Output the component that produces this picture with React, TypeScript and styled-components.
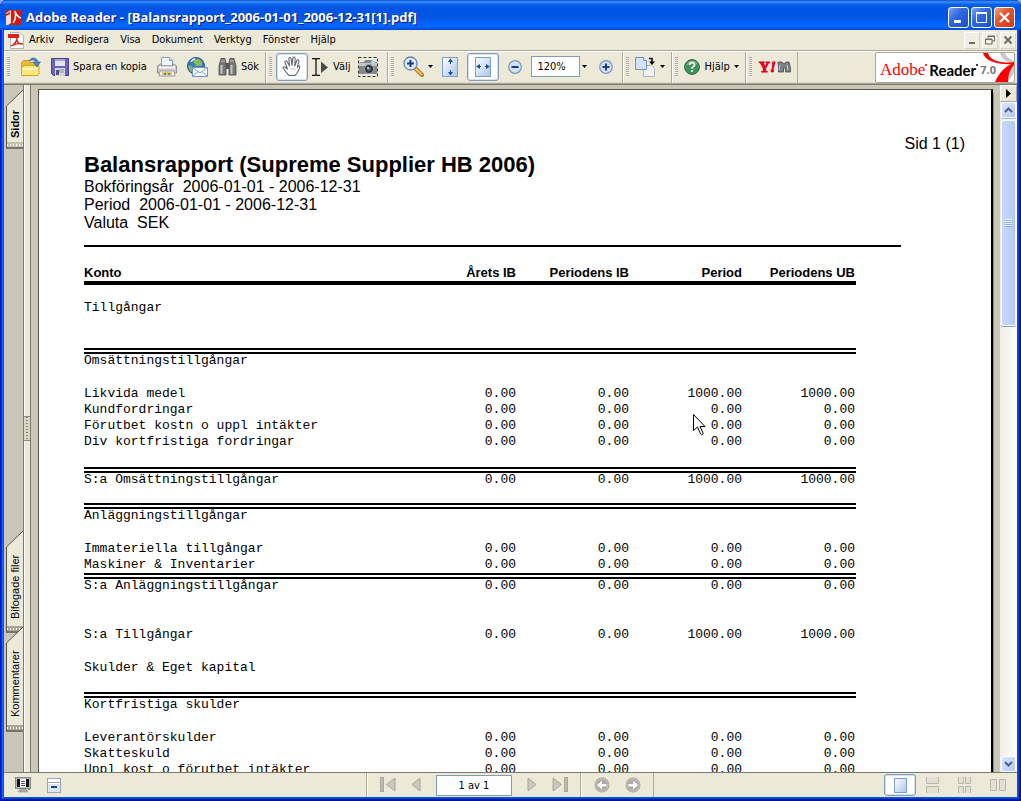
import React from "react";
import styled, { createGlobalStyle, css } from "styled-components";

const ui = `"DejaVu Sans Condensed", Tahoma, "Liberation Sans", sans-serif`;
const face = "#ece9d8";
const shade = "#aca899";
const desk = "#cbc7b8";

const GlobalStyle = createGlobalStyle`
  html, body, #root { height: 100%; margin: 0; }
  body { background: #8fa9e6; font-family: ${ui}; font-size: 11px; color: #000; overflow: hidden; }
  * { box-sizing: border-box; }
  button { font: inherit; color: inherit; border: 0; background: none; padding: 0; margin: 0; }
  input { font: inherit; color: inherit; margin: 0; }
  svg { display: block; flex: none; }
`;

/* ---------- window frame ---------- */

const Window = styled.div`
  height: 100vh;
  display: flex;
  flex-direction: column;
  padding: 0 4px 4px;
  border-radius: 7px 7px 0 0;
  overflow: hidden;
  background: #0855dd;
  box-shadow:
    inset 1px 0 #0019cf, inset -1px 0 #00138c, inset 0 -1px #00138c,
    inset 2px 0 #0831d9, inset -2px 0 #001ea0, inset 0 -2px #001ea0,
    inset 3px 0 #166aee, inset -3px 0 #0441d8, inset 0 -3px #0441d8;
`;

const TitleBar = styled.header`
  flex: none;
  height: 30px;
  margin: 0 -4px;
  padding: 4px 6px 0 6px;
  display: flex;
  align-items: center;
  gap: 5px;
  color: #fff;
  background: linear-gradient(#0a4ad0 0, #3a93ff 2px, #0b62ea 4px, #0054e3 8px, #0055e5 18px, #0066ff 24px, #0064f8 27px, #0047d0 30px);
`;

const WindowTitle = styled.h1`
  flex: 1;
  margin: 0;
  font: bold 13px/20px "Open Sans", "Trebuchet MS", sans-serif;
  text-shadow: 1px 1px #0a1883;
  white-space: nowrap;
`;

const CaptionButton = styled.button<{ $close?: boolean }>`
  width: 21px;
  height: 21px;
  display: grid;
  place-items: center;
  border: 1px solid #fff;
  border-radius: 3px;
  background: ${(p) =>
    p.$close
      ? "linear-gradient(135deg, #f0a088 0, #e0552f 40%, #cf3a12 100%)"
      : "linear-gradient(135deg, #7ba5f5 0, #3169e0 40%, #1c4cd0 100%)"};
`;

const CaptionButtons = styled.div`
  display: flex;
  gap: 2px;
`;

/* ---------- menu ---------- */

const MenuBar = styled.nav`
  flex: none;
  height: 21px;
  padding: 0 1px 0 4px;
  display: flex;
  align-items: center;
  background: ${face};
  border-bottom: 1px solid ${shade};
`;

const Menus = styled.div`
  display: flex;
  gap: 1px;
`;

const MenuItem = styled.button`
  padding: 0 5px;
  line-height: 18px;
`;

const Spring = styled.div`
  flex: 1;
`;

const MdiButtons = styled.div`
  display: flex;
  gap: 2px;
`;

const MdiButton = styled.button`
  width: 16px;
  height: 17px;
  display: grid;
  place-items: center;
  background: #f1efe3;
  border: 1px solid;
  border-color: #fff #d8d4c2 #d8d4c2 #fff;
`;

/* ---------- toolbars ---------- */

const ToolBar = styled.div`
  flex: none;
  height: 33px;
  display: flex;
  padding-right: 2px;
  background: ${face};
  border-top: 1px solid #fff;
  border-bottom: 1px solid ${shade};
  box-shadow: inset 0 -1px #dedac8;
`;

const ToolGroup = styled.div<{ $gap?: number; $wide?: boolean }>`
  display: flex;
  align-items: center;
  gap: ${(p) => p.$gap ?? 6}px;
  padding: 0 ${(p) => (p.$wide ? 9 : 6)}px 2px 2px;
  border-left: 1px solid #fff;
  border-right: 1px solid ${shade};
`;

const Grip = styled.span`
  width: 3px;
  height: 20px;
  flex: none;
  background: repeating-linear-gradient(${shade} 0 1px, #f8f6ec 1px 2px);
`;

const Tool = styled.button<{ $pressed?: boolean }>`
  display: flex;
  align-items: center;
  justify-content: center;
  gap: 4px;
  white-space: nowrap;
  ${(p) =>
    p.$pressed &&
    css`
      width: 32px;
      height: 28px;
      background: #fff;
      border: 1px solid #7f9db9;
      border-radius: 3px;
      box-shadow: inset 0 0 0 1px #d5e1ee;
    `}
`;

const Field = styled.input<{ $width: number; $centered?: boolean }>`
  width: ${(p) => p.$width}px;
  height: 21px;
  padding: 0 5px;
  border: 1px solid #7f9db9;
  background: #fff;
  text-align: ${(p) => (p.$centered ? "center" : "left")};
`;

const ZoomBox = styled.div`
  display: flex;
  align-items: center;
  gap: 2px;
  padding-right: 3px;
`;

const Brand = styled.a`
  position: relative;
  width: 140px;
  height: 31px;
  display: flex;
  align-items: center;
  padding: 4px 0 0 4px;
  gap: 1px;
  background: #fff;
  border: 1px solid ${shade};
  border-radius: 2px;
  color: #000;
  text-decoration: none;
  overflow: hidden;
`;

const BrandSwoosh = styled.svg`
  position: absolute;
  right: 0;
  top: 0;
`;

const BrandAdobe = styled.span`
  font: 17px/20px "Liberation Serif", serif;
  color: #f00;
`;

const BrandReader = styled.span`
  font: bold 15px/20px Lato, sans-serif;
`;

const BrandVersion = styled.span`
  position: relative;
  font: bold 11px/20px "Open Sans", sans-serif;
  color: #777;
`;

const Mark = styled.i<{ $color: string }>`
  width: 2px;
  height: 2px;
  margin: 0 1px 10px -1px;
  border-radius: 1px;
  background: ${(p) => p.$color};
`;

/* ---------- work area ---------- */

const Work = styled.main`
  flex: 1;
  min-height: 0;
  display: flex;
  background: ${desk};
  border-top: 1px solid #7d7a6c;
`;

const TabStrip = styled.nav`
  width: 20px;
  flex: none;
  display: flex;
  flex-direction: column;
  padding: 5px 0 40px 2px;
  border-right: 1px solid #7d7a6c;
`;

const TabButton = styled.button<{ $active?: boolean; $body: number; $overlap?: boolean }>`
  position: relative;
  display: flex;
  flex-direction: column;
  width: 17px;
  margin-top: ${(p) => (p.$overlap ? "-6px" : "0")};
  font: ${(p) => (p.$active ? "bold" : "normal")} 11px/16px "Liberation Sans", sans-serif;

  & > span {
    height: ${(p) => p.$body}px;
    display: flex;
    align-items: center;
    justify-content: center;
    writing-mode: vertical-rl;
    transform: rotate(180deg);
    background: ${face};
    border-right: 1px solid #55534a;
    white-space: nowrap;
  }
`;

const TabFoot = styled.i<{ $active?: boolean }>`
  height: 7px;
  border-left: 1px solid #55534a;
  border-bottom: 2px solid #77756a;
  background:
    radial-gradient(circle, #fff 0 1px, transparent 1px) 2px 1px / 3px 4px repeat-x,
    ${(p) => (p.$active ? "#c4c0b0" : "#a9a698")};
`;

const Splitter = styled.div`
  width: 7px;
  flex: none;
  display: flex;
  align-items: center;
  background: linear-gradient(90deg, #fff 0 1px, ${face} 1px);
  border-right: 1px solid #7d7a6c;
`;

const SplitterHandle = styled.div`
  width: 6px;
  height: 25px;
  border-top: 1px solid #8d8a7c;
  border-bottom: 1px solid #8d8a7c;
  background: radial-gradient(circle, #8a877a 0 1px, transparent 1px) 1px 2px / 4px 3px, #dbd7c6;
`;

const Viewport = styled.section`
  flex: 1;
  min-width: 0;
  overflow: hidden;
  padding: 4px 7px 0;
`;

const Paper = styled.article`
  position: relative;
  min-height: 100%;
  padding: 44px 26px 0 45px;
  background: #fff;
  border: 1px solid #55534a;
  border-right: 2px solid #000;
  border-bottom: 0;
  box-shadow: 1px 4px #8d8a7c;
  font: 16px/18px "Liberation Sans", Arial, sans-serif;
`;

const PageMark = styled.p`
  margin: 0;
  line-height: 20px;
  text-align: right;
`;

const ReportTitle = styled.h2`
  margin: 0;
  font-size: 22px;
  line-height: 22px;
  padding-bottom: 2px;
`;

const Meta = styled.p`
  margin: 0;
  white-space: pre;
`;

const Rule = styled.hr`
  margin: 13px 64px 18px 0;
  border: 0;
  height: 2px;
  background: #000;
`;

const TableWrap = styled.div`
  padding-right: 109px;
`;

const Ledger = styled.table`
  width: 100%;
  table-layout: fixed;
  border-spacing: 0;
  font: 13px/16px "Liberation Mono", "Courier New", monospace;

  th, td {
    padding: 0 1px 0 0;
    text-align: right;
    white-space: nowrap;
  }
  th:first-child, td:first-child {
    text-align: left;
  }
  thead th {
    width: 113px;
    font: bold 13px/16px "Liberation Sans", Arial, sans-serif;
    border-bottom: 4px solid #000;
  }
  thead th:first-child {
    width: auto;
  }
`;

const LedgerRow = styled.tr<{ $rule?: boolean; $before?: number; $after?: number }>`
  && > td {
    padding-top: ${(p) => p.$before ?? 0}px;
    padding-bottom: ${(p) => p.$after ?? 0}px;
    ${(p) =>
      p.$rule &&
      css`
        border-top: 6px double #000;
        line-height: 14px;
      `}
  }
`;

const Pointer = styled.svg`
  position: absolute;
  left: 654px;
  top: 324px;
`;

const ScrollColumn = styled.div`
  width: 17px;
  flex: none;
  display: flex;
  flex-direction: column;
  background: linear-gradient(90deg, #eeede5, #fefefb);
`;

const PaneMenuButton = styled.button`
  height: 17px;
  display: grid;
  place-items: center;
  background: ${face};
  border: 1px solid;
  border-color: #fff ${shade} ${shade} #fff;
`;

const ScrollButton = styled.button`
  height: 16px;
  margin: 0 1px;
  display: grid;
  place-items: center;
  border: 1px solid #fff;
  border-radius: 2px;
  background: linear-gradient(135deg, #dbe5ff, #b5c9f8);
  box-shadow: 0 1px #9db6e8;
`;

const ScrollThumb = styled.div`
  flex: 0 0 30%;
  margin: 2px 1px 0;
  display: grid;
  place-items: center;
  border: 1px solid #fff;
  border-radius: 2px;
  background: linear-gradient(90deg, #c9d7fc, #bccffb 70%, #afc4f6);
  box-shadow: 0 1px #7d9ee0;
`;

/* ---------- status bar ---------- */

const StatusBar = styled.footer`
  flex: none;
  height: 25px;
  display: grid;
  grid-template-columns: 1fr auto 1fr;
  background: ${face};
  border-top: 1px solid #7d7a6c;
`;

const StatusSide = styled.div<{ $end?: boolean }>`
  display: flex;
  align-items: center;
  justify-content: ${(p) => (p.$end ? "flex-end" : "flex-start")};
  gap: ${(p) => (p.$end ? 18 : 16)}px;
  padding: 0 11px;

  & > button[aria-pressed="true"] {
    height: 22px;
    margin-right: -8px;
  }
`;

const PagerGroup = styled.div`
  display: flex;
`;

const Pager = styled.div`
  display: flex;
  align-items: center;
  justify-content: center;
  gap: 15px;
  padding: 0 12px;
  border-left: 1px solid #fff;
  border-right: 1px solid ${shade};
  &:first-child {
    box-shadow: -1px 0 ${shade};
  }
`;

/* ---------- drawings ---------- */

const ReaderIcon = () => (
  <svg width="15" height="15" viewBox="0 0 15 15">
    <rect width="15" height="15" rx="1" fill="#d8180c" />
    <path d="M0 3l5-3v13l-3 2H0z" fill="#f7dcd6" />
    <path d="M0 4l4-2v2L0 6z" fill="#c8200f" />
    <path d="M7 13c3-4 3-8 2-12 1 4 3 6 6 7" stroke="#fff" strokeWidth="1.500" fill="none" />
  </svg>
);

const PdfIcon = () => (
  <svg width="16" height="17" viewBox="0 0 16 17">
    <path d="M2.500.500h9l4 3v13h-13z" fill="#fff" stroke="#b4b4b4" />
    <rect y="2" width="11" height="4" fill="#d9231a" />
    <path d="M3 14c3-1 6-5 6-8-1 4 2 6 6 6-4-1-8 0-12 2z" fill="none" stroke="#d9231a" strokeWidth="1.300" />
  </svg>
);

const OpenIcon = () => (
  <svg width="21" height="20" viewBox="0 0 21 20">
    <path d="M1.500 18V5.500l2-2h5l1.500 2h7V18z" fill="#e9bd3a" stroke="#c99a1e" />
    <path d="M1.500 18.500V10l3-1.500H19V17l-1 1.500z" fill="#fce67c" stroke="#d3a526" />
    <path d="M2.500 12h15" stroke="#fff6c0" strokeWidth="2" />
    <path d="M9 4C11 0 17 0 18 5h2.500L17 10l-4-5h2.500C15 2.500 12 2.500 9 4z" fill="#4d86c6" stroke="#2c5e9c" strokeWidth=".6" />
  </svg>
);

const SaveIcon = () => (
  <svg width="18" height="18" viewBox="0 0 18 18">
    <path d="M.5.5h17v17h-15l-2-2z" fill="#6a63bd" stroke="#474098" />
    <rect x="4" y="1" width="10" height="7" fill="#e3e2ee" />
    <rect x="4" y="1" width="10" height="2" fill="#a9a6cf" />
    <rect x="4" y="10" width="10" height="8" fill="#d5d4de" />
    <path d="M8 12h5M8 14h5" stroke="#8c8c9a" />
    <rect x="5" y="12" width="3" height="5" fill="#55516e" />
  </svg>
);

const PrintIcon = () => (
  <svg width="20" height="20" viewBox="0 0 20 20">
    <path d="M4.500 9V.5h8l3 3V9z" fill="#eef4fc" stroke="#8aa4c4" />
    <path d="M12.500.5v3h3" fill="#c6d8ee" stroke="#8aa4c4" />
    <path d="M.5 16V9l3-2h1v2h11V7h1l3 2v7z" fill="#c9c9cd" stroke="#8e8e94" />
    <path d="M2 10.500h16" stroke="#f8f8f8" strokeWidth="2" />
    <path d="M3 14h14l1 5H2z" fill="#f4f4f6" stroke="#9a9aa0" />
    <path d="M5 15h10v3H5z" fill="#f0c94a" />
    <path d="M7 16h2v2H7zM11 16h2v2h-2z" fill="#4f82c0" />
  </svg>
);

const MailIcon = () => (
  <svg width="21" height="20" viewBox="0 0 21 20">
    <circle cx="9" cy="9" r="8.500" fill="#3f78bd" stroke="#2a568e" />
    <path d="M8 2c5-1 8 3 7 6-2 2-3 0-4 1-3 1-2-2-4-3-1-2-1-3 1-4zM2 8c2 0 3 2 4 4 0 2-1 3-2 3-2-2-3-5-2-7z" fill="#84bd58" />
    <path d="M4 5c1-2 3-3 4-3" stroke="#d4e6fa" strokeWidth="1.500" fill="none" />
    <path d="M5.500 10.500h15v9h-15z" fill="#f6f9fd" stroke="#6d97c6" />
    <path d="M6 11l7 5 7-5M6 19l5-4.500M20 19l-5-4.500" fill="none" stroke="#7ba2cd" />
  </svg>
);

const BinocularsIcon = () => (
  <svg width="19" height="18" viewBox="0 0 19 18">
    <path d="M3 .5h4l1 4v12.500H1V8zM12 .5h4L18 8v9h-7V4.500z" fill="#777" stroke="#4a4a4a" strokeWidth=".8" />
    <path d="M8 5h3v6H8z" fill="#555" />
    <path d="M3.500 7v9M13.500 7v9" stroke="#c4c4c4" strokeWidth="2" />
    <path d="M3 3h4M12 3h4" stroke="#c8c8c8" />
  </svg>
);

const HandIcon = () => (
  <svg width="20" height="21" viewBox="0 0 20 21">
    <path
      d="M7 19.500C5 17 3 15 1.200 12.500c-.8-1.500 1-2.300 2-1.200L5.500 13 3 6.500c-.5-1.700 1.500-2.300 2.200-.8L7.500 10 6.800 2.800c0-1.700 2-1.800 2.300-.2l.9 6.900.9-7.500c.3-1.500 2.300-1.200 2.200.4l-.3 7.600 2-5.500c.6-1.400 2.400-.8 2 .8l-1.500 6.200c.8-1.300 1.300-2 2.200-1.500.8.6.3 1.600-.2 2.700-1.300 3-2.300 5-4.300 6.800z"
      fill="#fff" stroke="#63676f" strokeWidth="1.100" strokeLinejoin="round"
    />
    <path d="M8.500 13c2-1 4 0 5 1" stroke="#b8bcc4" fill="none" />
  </svg>
);

const SelectIcon = () => (
  <svg width="17" height="18" viewBox="0 0 17 18">
    <path d="M0 .5h3l1 1 1-1h3M0 17.500h3l1-1 1 1h3M4 1v16" fill="none" stroke="#111" strokeWidth="1.300" />
    <path d="M9 3.500v11.500l7-5.500z" fill="#4a4a4a" />
  </svg>
);

const CameraIcon = () => (
  <svg width="20" height="20" viewBox="0 0 20 20">
    <rect x=".5" y=".5" width="19" height="19" fill="none" stroke="#333" strokeDasharray="3 2" />
    <path d="M1 6l2-1h3l1-2h7l1 2h4v12H1z" fill="#85878a" />
    <path d="M1 6h18v3H1z" fill="#c3c6ca" />
    <circle cx="11" cy="12" r="4.500" fill="#2e3136" stroke="#a0a4aa" />
    <circle cx="11" cy="12" r="2" fill="#53708f" />
    <circle cx="10" cy="11" r="1" fill="#d7e8fa" />
    <rect x="13" y="4" width="4" height="2" fill="#9fd6f5" />
  </svg>
);

const ZoomIcon = () => (
  <svg width="21" height="21" viewBox="0 0 21 21">
    <path d="M12 12l7 7" stroke="#a8761b" strokeWidth="4" strokeLinecap="round" />
    <path d="M12 12l6.500 6.500" stroke="#f6c860" strokeWidth="2" strokeLinecap="round" />
    <circle cx="7.500" cy="7.500" r="6.500" fill="#dceafb" stroke="#6987ad" strokeWidth="1.300" />
    <path d="M7.500 4v7M4 7.500h7" stroke="#173d7c" strokeWidth="2" />
  </svg>
);

const Page = ({ children, w = 16, h = 20 }: { children?: React.ReactNode; w?: number; h?: number }) => (
  <svg width={w} height={h} viewBox={`0 0 ${w} ${h}`}>
    <defs>
      <linearGradient id="pageFill" x1="0" y1="0" x2="1" y2="1">
        <stop offset="0" stopColor="#fff" />
        <stop offset="1" stopColor="#a9c5ea" />
      </linearGradient>
    </defs>
    <rect x=".5" y=".5" width={w - 1} height={h - 1} fill="url(#pageFill)" stroke="#7e9fc8" />
    {children}
  </svg>
);

const FitPageIcon = () => (
  <Page>
    <path d="M8.500 2v5M8.500 13v5" stroke="#1d4f91" />
    <path d="M6 5l2.500-3.500L11 5zM6 15l2.500 3.500L11 15z" fill="#1d4f91" />
  </Page>
);

const FitWidthIcon = () => (
  <Page>
    <path d="M2 9.500h4M10 9.500h4" stroke="#1d4f91" />
    <path d="M5 7L1 9.500 5 12zM11 7l4 2.500-4 2.500z" fill="#1d4f91" />
  </Page>
);

const RoundIcon = ({ plus }: { plus?: boolean }) => (
  <svg width="14" height="14" viewBox="0 0 14 14">
    <circle cx="7" cy="7" r="6.300" fill="#cfe0f7" stroke="#8095b8" strokeWidth="1.200" />
    <path d={plus ? "M7 3.500v7M3.500 7h7" : "M3.500 7h7"} stroke="#173d7c" strokeWidth="2" />
  </svg>
);

const RotateIcon = () => (
  <svg width="21" height="20" viewBox="0 0 21 20">
    <path d="M8.500 8.500h8l3 3v8h-11z" fill="#f3f3f1" stroke="#b4b4b4" />
    <path d="M.5.5h8l3 3v9H.5z" fill="#d3e3f7" stroke="#6d92c4" />
    <path d="M8.500.5v3h3" fill="#fff" stroke="#6d92c4" />
    <path d="M14 1.500h3V5" fill="none" stroke="#000" strokeWidth="1.500" />
    <path d="M14 4.500h6L17 8z" fill="#000" />
  </svg>
);

const HelpIcon = () => (
  <svg width="16" height="16" viewBox="0 0 16 16">
    <circle cx="8" cy="8" r="7.400" fill="#43915a" stroke="#2b6b3e" />
    <path d="M3 6c1-4 8-5 10-1" fill="none" stroke="#8cc79c" />
    <path d="M5.500 6c.2-3 5-3 5-.2C10.500 7.500 8 7.500 8 9.700" fill="none" stroke="#fff" strokeWidth="1.800" />
    <circle cx="8" cy="12" r="1.100" fill="#fff" />
  </svg>
);

const YahooIcon = () => (
  <svg width="33" height="20" viewBox="0 -3 33 20">
    <text x="1" y="12" fontFamily="Liberation Serif, serif" fontWeight="bold" fontSize="15" fill="#e0001b" stroke="#e0001b">Y</text>
    <text x="12" y="12" fontFamily="Liberation Serif, serif" fontStyle="italic" fontWeight="bold" fontSize="15" fill="#e0001b" stroke="#e0001b">!</text>
    <path d="M20 2h4l2 2 2-2h3l1.500 6v4h-5V8h-2v4h-5V7z" fill="#7b8086" stroke="#454a50" strokeWidth=".8" />
    <path d="M22 5l-1 5M29 5l1 5" stroke="#c9d0d6" />
  </svg>
);

const Caret = () => (
  <svg width="5" height="3" viewBox="0 0 5 3">
    <path d="M0 0h5L2.500 3z" fill="#000" />
  </svg>
);

const Swoosh = () => (
  <BrandSwoosh width="32" height="29" viewBox="0 0 32 29" aria-hidden="true">
    <path d="M18 0c1 5 6 9 14 11V8c-5-2-8-5-9-8zM32 13L20 29h6l6-9z" fill="#c9c9c9" />
    <path d="M1 0c2 8 14 12 31 11V9C17 11 8 7 6 0z" fill="#f00" />
    <path d="M32 10c-9 3-15 10-19 19h13c0-7 2-12 6-17z" fill="#f00" />
  </BrandSwoosh>
);

const MonitorIcon = () => (
  <svg width="16" height="16" viewBox="0 0 16 16">
    <rect x=".5" y=".5" width="15" height="11" fill="#b9b9b9" stroke="#888" />
    <rect x="2" y="2" width="12" height="8" fill="#111" />
    <rect x="5" y="2" width="6" height="8" fill="#fff" />
    <path d="M6 4.500h4M6 6.500h4M6 8.500h4" stroke="#557" />
    <path d="M5 12h6l2 3H3z" fill="#aaa" stroke="#888" strokeWidth=".5" />
    <rect x="13" y="12" width="2" height="1" fill="#3c3" />
  </svg>
);

const HidePaneIcon = () => (
  <svg width="14" height="15" viewBox="0 0 14 15">
    <rect x=".5" y=".5" width="13" height="14" fill="#fff" stroke="#9aa5b5" />
    <path d="M1 4.500h12" stroke="#9aa5b5" />
    <rect x="1" y="6" width="12" height="8" fill="#dbe5f3" />
    <path d="M4 9h6" stroke="#1d3f7c" strokeWidth="2" />
  </svg>
);

const PagerIcon = ({ kind }: { kind: "first" | "prev" | "next" | "last" }) => {
  const flip = kind === "next" || kind === "last";
  const edge = kind === "first" || kind === "last";
  const w = edge ? 16 : 10;
  return (
    <svg width={w} height="16" viewBox={`0 0 ${w} 16`}>
      <g transform={flip ? `translate(${w} 0) scale(-1 1)` : undefined}>
        {edge && <rect x=".5" y=".5" width="3" height="14" fill="#bdbab0" stroke="#a9a69b" />}
        <path d={edge ? "M15 1v13L6.500 7.500z" : "M9 1v13L1 7.500z"} fill="#cbc8bf" stroke="#a9a69b" />
      </g>
    </svg>
  );
};

const HistoryIcon = ({ forward }: { forward?: boolean }) => (
  <svg width="16" height="16" viewBox="0 0 16 16">
    <circle cx="8" cy="8" r="7.500" fill="#aeaba2" />
    <circle cx="8" cy="8" r="6" fill="none" stroke="#c6c3ba" />
    <g transform={forward ? "translate(16 0) scale(-1 1)" : undefined}>
      <path d="M3 8l5-4.500V7h4.500v2.500H8V12.500z" fill="#fff" />
    </g>
  </svg>
);

const LayoutIcon = ({ kind }: { kind: "continuous" | "grid" | "facing" }) => (
  <svg width={kind === "facing" ? 16 : 14} height="16" viewBox={kind === "facing" ? "0 0 16 16" : "0 0 14 16"}>
    <g fill="#e2dfd4" stroke="#b9b6aa">
      {kind === "continuous" && <path d="M.5 0v6.500h12V0M.5 16V9.500h12V16" />}
      {kind === "grid" && <path d="M.5 0v6.500h5V0M7.500 0v6.500h5V0M.5 16V9.500h5V16M7.500 16V9.500h5V16" />}
      {kind === "facing" && <path d="M.5 2.500h6v11h-6zM9.500 2.500h6v11h-6z" />}
    </g>
  </svg>
);

const Chevron = ({ down }: { down?: boolean }) => (
  <svg width="9" height="6" viewBox="0 0 9 6">
    <path d={down ? "M1 1l3.500 3.500L8 1" : "M1 5l3.500-3.500L8 5"} fill="none" stroke="#4d6185" strokeWidth="2" />
  </svg>
);

/* ---------- data ---------- */

type Entry = {
  label: string;
  amounts?: [string, string, string, string];
  rule?: boolean;
  before?: number;
  after?: number;
};

const zero: [string, string, string, string] = ["0.00", "0.00", "0.00", "0.00"];
const thousand: [string, string, string, string] = ["0.00", "0.00", "1000.00", "1000.00"];

const entries: Entry[] = [
  { label: "Tillgångar", before: 15, after: 32 },
  { label: "Omsättningstillgångar", rule: true, after: 18 },
  { label: "Likvida medel", amounts: thousand },
  { label: "Kundfordringar", amounts: zero },
  { label: "Förutbet kostn o uppl intäkter", amounts: zero },
  { label: "Div kortfristiga fordringar", amounts: zero, after: 17 },
  { label: "S:a Omsättningstillgångar", amounts: thousand, rule: true, after: 16 },
  { label: "Anläggningstillgångar", rule: true, after: 18 },
  { label: "Immateriella tillgångar", amounts: zero },
  { label: "Maskiner & Inventarier", amounts: zero },
  { label: "S:a Anläggningstillgångar", amounts: zero, rule: true, after: 34 },
  { label: "S:a Tillgångar", amounts: thousand, after: 17 },
  { label: "Skulder & Eget kapital", after: 16 },
  { label: "Kortfristiga skulder", rule: true, after: 18 },
  { label: "Leverantörskulder", amounts: zero },
  { label: "Skatteskuld", amounts: zero },
  { label: "Uppl kost o förutbet intäkter", amounts: zero },
];

const menus = ["Arkiv", "Redigera", "Visa", "Dokument", "Verktyg", "Fönster", "Hjälp"];

export default function App() {
  return (
    <>
      <GlobalStyle />
      <Window>
        <TitleBar>
          <ReaderIcon />
          <WindowTitle>Adobe Reader - [Balansrapport_2006-01-01_2006-12-31[1].pdf]</WindowTitle>
          <CaptionButtons>
            <CaptionButton aria-label="Minimera">
              <svg width="13" height="13"><rect x="2" y="9" width="7" height="3" fill="#fff" /></svg>
            </CaptionButton>
            <CaptionButton aria-label="Maximera">
              <svg width="13" height="13"><path d="M1.500 2v9.500h10V2M1 2.500h11M1 1.500h11" stroke="#fff" fill="none" /></svg>
            </CaptionButton>
            <CaptionButton aria-label="Stäng" $close>
              <svg width="13" height="13"><path d="M2 2l9 9M11 2l-9 9" stroke="#fff" strokeWidth="2.200" /></svg>
            </CaptionButton>
          </CaptionButtons>
        </TitleBar>

        <MenuBar>
          <PdfIcon />
          <Menus>
            {menus.map((m) => (
              <MenuItem key={m}>{m}</MenuItem>
            ))}
          </Menus>
          <Spring />
          <MdiButtons>
            <MdiButton aria-label="Minimera dokument">
              <svg width="10" height="10"><path d="M2 8h6" stroke="#6f6d62" strokeWidth="2" /></svg>
            </MdiButton>
            <MdiButton aria-label="Återställ dokument">
              <svg width="10" height="10"><path d="M3 3V1h6.500v5H7M.5 4h6.500v5H.5zM3 1.500h6.500M.5 4.500H7" stroke="#6f6d62" fill="none" /></svg>
            </MdiButton>
            <MdiButton aria-label="Stäng dokument">
              <svg width="10" height="10"><path d="M1.500 1.500l7 7M8.500 1.500l-7 7" stroke="#6f6d62" strokeWidth="2" /></svg>
            </MdiButton>
          </MdiButtons>
        </MenuBar>

        <ToolBar>
          <ToolGroup $gap={10}>
            <Grip />
            <Tool aria-label="Öppna"><OpenIcon /></Tool>
            <Tool><SaveIcon />Spara en kopia</Tool>
            <Tool aria-label="Skriv ut"><PrintIcon /></Tool>
            <Tool aria-label="E-post"><MailIcon /></Tool>
            <Tool><BinocularsIcon />Sök</Tool>
          </ToolGroup>
          <ToolGroup $gap={4} $wide>
            <Grip />
            <Tool $pressed aria-label="Handverktyg"><HandIcon /></Tool>
            <Tool><SelectIcon />Välj</Tool>
            <Spring />
            <Tool aria-label="Ögonblicksbild"><CameraIcon /></Tool>
          </ToolGroup>
          <ToolGroup $gap={9} $wide>
            <Grip />
            <Tool aria-label="Zooma in"><ZoomIcon /><Caret /></Tool>
            <Tool aria-label="Anpassa sida"><FitPageIcon /></Tool>
            <Tool $pressed aria-label="Anpassa bredd"><FitWidthIcon /></Tool>
            <Tool aria-label="Förminska"><RoundIcon /></Tool>
            <ZoomBox>
              <Field $width={49} aria-label="Zoom" defaultValue="120%" />
              <Tool aria-label="Zoomnivåer"><Caret /></Tool>
            </ZoomBox>
            <Tool aria-label="Förstora"><RoundIcon plus /></Tool>
          </ToolGroup>
          <ToolGroup>
            <Grip />
            <Tool aria-label="Rotera"><RotateIcon /><Caret /></Tool>
          </ToolGroup>
          <ToolGroup>
            <Grip />
            <Tool><HelpIcon />Hjälp <Caret /></Tool>
          </ToolGroup>
          <ToolGroup>
            <Grip />
            <Tool aria-label="Yahoo"><YahooIcon /></Tool>
          </ToolGroup>
          <Spring />
          <Brand href="#">
            <Swoosh />
            <BrandAdobe>Adobe</BrandAdobe>
            <Mark $color="#f00" />
            <BrandReader>Reader</BrandReader>
            <Mark $color="#000" />
            <BrandVersion>7.0</BrandVersion>
          </Brand>
        </ToolBar>

        <Work>
          <TabStrip>
            <Tab label="Sidor" body={36} active />
            <Spring />
            <Tab label="Bifogade filer" body={79} />
            <Tab label="Kommentarer" body={82} overlap />
          </TabStrip>
          <Splitter><SplitterHandle /></Splitter>
          <Viewport>
            <Paper>
              <PageMark>Sid 1 (1)</PageMark>
              <ReportTitle>Balansrapport (Supreme Supplier HB 2006)</ReportTitle>
              <Meta>{"Bokföringsår  2006-01-01 - 2006-12-31"}</Meta>
              <Meta>{"Period  2006-01-01 - 2006-12-31"}</Meta>
              <Meta>{"Valuta  SEK"}</Meta>
              <Rule />
              <TableWrap>
                <Ledger>
                  <thead>
                    <tr>
                      <th scope="col">Konto</th>
                      <th scope="col">Årets IB</th>
                      <th scope="col">Periodens IB</th>
                      <th scope="col">Period</th>
                      <th scope="col">Periodens UB</th>
                    </tr>
                  </thead>
                  <tbody>
                    {entries.map((e) => (
                      <LedgerRow key={e.label} $rule={e.rule} $before={e.before} $after={e.after}>
                        <td colSpan={e.amounts ? 1 : 5}>{e.label}</td>
                        {e.amounts?.map((a, i) => <td key={i}>{a}</td>)}
                      </LedgerRow>
                    ))}
                  </tbody>
                </Ledger>
              </TableWrap>
              <Pointer width="13" height="22" viewBox="0 0 13 22" aria-hidden="true">
                <path d="M.5.5v16l4-3.500 3 7c1 1.500 3 .5 2.500-1l-3-6.500h5z" fill="#fff" stroke="#000" />
              </Pointer>
            </Paper>
          </Viewport>
          <ScrollColumn>
            <PaneMenuButton aria-label="Panelmeny">
              <svg width="5" height="9"><path d="M0 0l5 4.500L0 9z" fill="#000" /></svg>
            </PaneMenuButton>
            <ScrollButton aria-label="Rulla upp"><Chevron /></ScrollButton>
            <ScrollThumb>
              <svg width="7" height="8"><path d="M0 .5h7M0 2.500h7M0 4.500h7M0 6.500h7" stroke="#eef4fe" /><path d="M0 1.500h7M0 3.500h7M0 5.500h7M0 7.500h7" stroke="#8cb0f8" /></svg>
            </ScrollThumb>
            <Spring />
            <ScrollButton aria-label="Rulla ned"><Chevron down /></ScrollButton>
          </ScrollColumn>
        </Work>

        <StatusBar>
          <StatusSide>
            <Tool aria-label="Helskärm"><MonitorIcon /></Tool>
            <Tool aria-label="Dölj verktygsfält"><HidePaneIcon /></Tool>
          </StatusSide>
          <PagerGroup>
            <Pager>
              <Tool aria-label="Första sidan"><PagerIcon kind="first" /></Tool>
              <Tool aria-label="Föregående sida"><PagerIcon kind="prev" /></Tool>
              <Field $width={76} $centered aria-label="Sida" defaultValue="1 av 1" />
              <Tool aria-label="Nästa sida"><PagerIcon kind="next" /></Tool>
              <Tool aria-label="Sista sidan"><PagerIcon kind="last" /></Tool>
            </Pager>
            <Pager>
              <Tool aria-label="Föregående vy"><HistoryIcon /></Tool>
              <Tool aria-label="Nästa vy"><HistoryIcon forward /></Tool>
            </Pager>
          </PagerGroup>
          <StatusSide $end>
            <Tool $pressed aria-pressed="true" aria-label="Enkel sida"><Page w={13} h={15} /></Tool>
            <Tool aria-label="Kontinuerlig"><LayoutIcon kind="continuous" /></Tool>
            <Tool aria-label="Kontinuerlig, uppslag"><LayoutIcon kind="grid" /></Tool>
            <Tool aria-label="Uppslag"><LayoutIcon kind="facing" /></Tool>
          </StatusSide>
        </StatusBar>
      </Window>
    </>
  );
}

function Tab({ label, body, active, overlap }: { label: string; body: number; active?: boolean; overlap?: boolean }) {
  return (
    <TabButton $body={body} $active={active} $overlap={overlap}>
      <svg width="17" height="16" viewBox="0 0 17 16">
        <path d="M17 0v16H0z" fill={face} />
        <path d="M17 0L.5 16" stroke="#55534a" />
      </svg>
      <span>{label}</span>
      <TabFoot $active={active} />
    </TabButton>
  );
}
